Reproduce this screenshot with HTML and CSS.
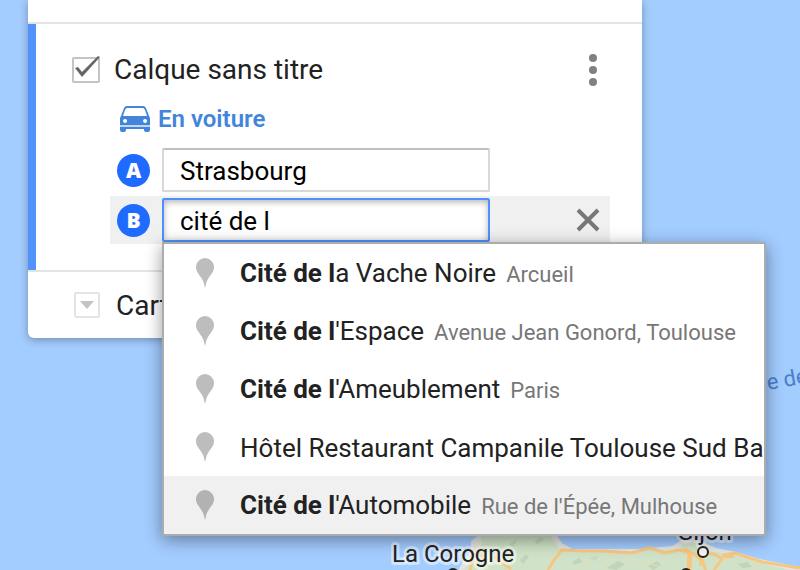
FILE: index.html
```
<!DOCTYPE html>
<html lang="fr">
<head>
<meta charset="utf-8">
<meta name="viewport" content="width=device-width, initial-scale=1">
<title>Calque sans titre</title>
<link rel="stylesheet" href="styles.css">
</head>
<body>
<svg class="map" width="800" height="570" viewBox="0 0 800 570" aria-hidden="true">
  <path class="beach" d="M458 570 L466 557 471 549 471 541 480 534 492 520H548L556 534 562 543 572 549 640 549 662 547 672 546 684 539 700 541 716 548 736 552 760 559 800 567V570Z"/>
  <path class="land" d="M464 570 L474 556 482 543 480 535 492 522H540L552 538 559 548 572 552 595 551 640 552 650 550 668 550 680 549 682 544 697 543 700 550 716 552 736 556 760 563 790 570Z"/>
  <path class="hill" d="M520 560l6-6 3 3-6 7zM534 541l8-4 2 3-7 4zM572 562l7-4 4 4-8 3zM606 568l12-7 7 3-9 6zM508 545l9-6-3 7zM738 564l9-2 5 5-9 1zM648 566l9-5 4 4-8 5zM590 558l8-2-3 5z"/>
  <path class="road road-thin" d="M608 550l4 9-7 11M578 570l6-8 12-4M630 566l16-4 14 5M760 562l-8 8"/>
  <path class="road" d="M470 570l5-19 9 6 4 10M494 557l17 12M548 570l6-10 8-10 20 1h20l30 2 18-5 15 5 14-3 14 3 10 8 3 12M701 566l-1-12 14 0 8 5-8 11M722 556l12-3 28 9 38 6"/>
  <path class="road road-wide" d="M684 550l6 3-1 17M724 556l10-1"/>
  <text class="city" x="392" y="562">La Corogne</text>
  <circle class="dot" cx="453" cy="574" r="5"/>
  <text class="city" x="677" y="540">Gijon</text>
  <circle class="dot" cx="703" cy="552" r="5"/>
  <circle class="dot" cx="686" cy="574" r="5"/>
  <text class="sea" x="768" y="390" transform="rotate(-10 768 390)">e de</text>
</svg>

<main class="panel">
  <div class="panel-head"></div>
  <section class="layer">
    <div class="layer-title">
      <label class="toggle">
        <input class="check" type="checkbox" checked>
        <svg class="tick" width="30" height="28" viewBox="0 0 30 28" aria-hidden="true"><path d="M3 13l3-1 4 5L26 1l2 1-18 20z"/></svg>
        <span>Calque sans titre</span>
      </label>
      <button class="icon-button" type="button" aria-label="Options du calque">
        <svg width="8" height="32" viewBox="0 0 8 32"><circle cx="4" cy="4" r="4"/><circle cx="4" cy="16" r="4"/><circle cx="4" cy="28" r="4"/></svg>
      </button>
    </div>
    <a class="mode" href="#">
      <svg width="30" height="26" viewBox="0 0 30 26" aria-hidden="true">
        <path fill-rule="evenodd" d="M7 0h16q2 0 3 2l3 8q1 1 1 3v6H0v-6q0-2 1-3L4 2Q5 0 7 0zM7 2Q6 2 5 4L3 10h24l-2-6q-1-2-2-2zM5 13a2 2 0 1 0 .1 0zM25 13a2 2 0 1 0 .1 0z"/>
        <path d="M0 21h30v3q0 2-2 2h-2q-2 0-2-2v-1H6v1q0 2-2 2H2q-2 0-2-2z"/>
        <path class="bumper" d="M0 19h30v2H0z"/>
      </svg>
      <span>En voiture</span>
    </a>
    <div class="stops">
      <div class="stop">
        <label class="badge" for="from">A</label>
        <div class="field"><input class="place" id="from" type="text" value="Strasbourg"></div>
      </div>
      <div class="stop stop-active">
        <label class="badge" for="to">B</label>
        <div class="field">
          <input class="place place-active" id="to" type="text" value="cité de l" autocomplete="off">
          <ul class="menu">
            <li class="option"><svg class="pin" width="18" height="30" viewBox="0 0 18 30"><path d="M9 0a9 9 0 0 1 9 9c0 5-3 7-6 12-2 3-2 6-3 9-1-3-1-6-3-9C3 16 0 14 0 9a9 9 0 0 1 9-9z"/></svg><span class="name"><b>Cité de l</b>a Vache Noire<span class="area">Arcueil</span></span></li>
            <li class="option"><svg class="pin" width="18" height="30" viewBox="0 0 18 30"><path d="M9 0a9 9 0 0 1 9 9c0 5-3 7-6 12-2 3-2 6-3 9-1-3-1-6-3-9C3 16 0 14 0 9a9 9 0 0 1 9-9z"/></svg><span class="name"><b>Cité de l</b>'Espace<span class="area">Avenue Jean Gonord, Toulouse</span></span></li>
            <li class="option"><svg class="pin" width="18" height="30" viewBox="0 0 18 30"><path d="M9 0a9 9 0 0 1 9 9c0 5-3 7-6 12-2 3-2 6-3 9-1-3-1-6-3-9C3 16 0 14 0 9a9 9 0 0 1 9-9z"/></svg><span class="name"><b>Cité de l</b>'Ameublement<span class="area">Paris</span></span></li>
            <li class="option"><svg class="pin" width="18" height="30" viewBox="0 0 18 30"><path d="M9 0a9 9 0 0 1 9 9c0 5-3 7-6 12-2 3-2 6-3 9-1-3-1-6-3-9C3 16 0 14 0 9a9 9 0 0 1 9-9z"/></svg><span class="name">Hôtel Restaurant Campanile Toulouse Sud Balma</span></li>
            <li class="option option-active"><svg class="pin" width="18" height="30" viewBox="0 0 18 30"><path d="M9 0a9 9 0 0 1 9 9c0 5-3 7-6 12-2 3-2 6-3 9-1-3-1-6-3-9C3 16 0 14 0 9a9 9 0 0 1 9-9z"/></svg><span class="name"><b>Cité de l</b>'Automobile<span class="area">Rue de l'Épée, Mulhouse</span></span></li>
          </ul>
        </div>
        <button class="icon-button" type="button" aria-label="Supprimer l'étape">
          <svg width="24" height="24" viewBox="0 0 24 24"><path class="cross" d="M2 2l20 20M22 2L2 22"/></svg>
        </button>
      </div>
    </div>
  </section>
  <section class="base">
    <button class="expand" type="button" aria-label="Choisir le fond de carte"><svg width="14" height="8" viewBox="0 0 14 8"><path d="M0 0h14L7 8z"/></svg></button>
    <span class="base-name">Carte</span>
  </section>
</main>
</body>
</html>
```
FILE: styles.css
```
* { box-sizing: border-box; }

body {
  margin: 0;
  padding: 0 28px;
  min-height: 100vh;
  overflow: hidden;
  background: #a3ccff;
  color: #222;
  font: 28px/32px Roboto, "Liberation Sans", sans-serif;
}

button { padding: 0; border: 0; background: none; }
svg { display: block; flex: none; }

.map { position: absolute; left: 0; top: 0; }
.beach { fill: #e4e4e0; }
.land { fill: #d0e3c8; }
.hill { fill: #c1d5bb; }
.road { fill: none; stroke: #f8c77f; stroke-width: 3; stroke-linejoin: round; }
.road-thin { stroke: #ecd9ae; stroke-width: 1; }
.road-wide { stroke-width: 5; }
.city {
  font-size: 24px;
  fill: #222;
  stroke: rgba(255, 255, 255, 0.5);
  stroke-width: 6px;
  stroke-linejoin: round;
  paint-order: stroke;
}
.dot { fill: #f4f4f4; stroke: #222; stroke-width: 2; }
.sea { font-size: 22px; fill: #4a7fc9; }

.panel {
  position: relative;
  max-width: 614px;
  background: #fff;
  border-radius: 0 0 6px 6px;
  box-shadow: 0 2px 8px rgba(0, 0, 0, 0.3);
}
.panel-head { height: 24px; border-bottom: 2px solid #e4e4e4; }

.layer {
  padding: 29px 32px 26px 36px;
  border-left: 8px solid #5193fb;
}
.layer-title {
  display: flex;
  align-items: center;
  justify-content: space-between;
  padding-right: 13px;
}
.toggle {
  position: relative;
  display: flex;
  align-items: center;
  gap: 16px;
  line-height: 34px;
}
.check {
  appearance: none;
  width: 28px;
  height: 26px;
  margin: 0 -2px 0 0;
  border: 2px solid #c4c4c4;
  border-radius: 2px;
}
.tick { position: absolute; left: 0; top: 2px; fill: #666; }
.icon-button { fill: #808080; }

.mode {
  display: flex;
  align-items: center;
  gap: 8px;
  margin: 17px 0 12px 48px;
  color: #4285db;
  fill: #4285db;
  font-size: 24px;
  line-height: 30px;
  font-weight: 600;
  text-decoration: none;
}
.bumper { fill: #c0d8f5; }

.stops { display: grid; gap: 2px; margin-left: 38px; }
.stop {
  display: flex;
  align-items: center;
  height: 48px;
  padding: 0 10px 0 7px;
}
.stop-active { background: #f0f0f0; }
.badge {
  width: 33px;
  height: 33px;
  margin-right: 12px;
  border-radius: 50%;
  background: #1f6bff;
  color: #fff;
  font: 800 21px/33px "Open Sans", sans-serif;
  text-align: center;
}
.field { position: relative; flex: 0 1 328px; margin-right: auto; }
.place {
  display: block;
  width: 100%;
  height: 44px;
  padding: 2px 16px 0;
  border: 2px solid #d9d9d9;
  border-top-color: #c0c0c0;
  border-radius: 2px;
  outline: 0;
  background: #fff;
  color: #000;
  font: inherit;
  font-size: 26px;
}
.place-active {
  border-color: #4d90fe;
  box-shadow: inset 0 2px 6px rgba(0, 0, 0, 0.3);
}
.cross { fill: none; stroke: #777; stroke-width: 4; }

.menu {
  position: absolute;
  left: 0;
  top: 100%;
  width: 604px;
  margin: 0;
  padding: 0;
  list-style: none;
  overflow: hidden;
  border: 2px solid #acacac;
  background: #fff;
  box-shadow: 0 4px 16px rgba(0, 0, 0, 0.4);
}
.option {
  display: flex;
  align-items: center;
  height: 58px;
  padding-left: 32px;
  font-size: 26px;
  white-space: nowrap;
}
.option-active { background: #f0f0f0; }
.pin { fill: #bdbdbd; margin-right: 26px; }
.option-active .pin { fill: #b2b2b2; }
.name { padding-top: 2px; }
.name b { font-weight: 700; }
.area { margin-left: 10px; color: #777; font-size: 22px; }

.base {
  display: flex;
  align-items: center;
  gap: 16px;
  height: 68px;
  padding-left: 46px;
  border-top: 2px solid #e4e4e4;
}
.base-name { padding-top: 2px; }
.expand {
  display: grid;
  place-items: center;
  width: 26px;
  height: 26px;
  border: 2px solid #e4e4e4;
  border-radius: 2px;
  fill: #c4c4c4;
}
```
